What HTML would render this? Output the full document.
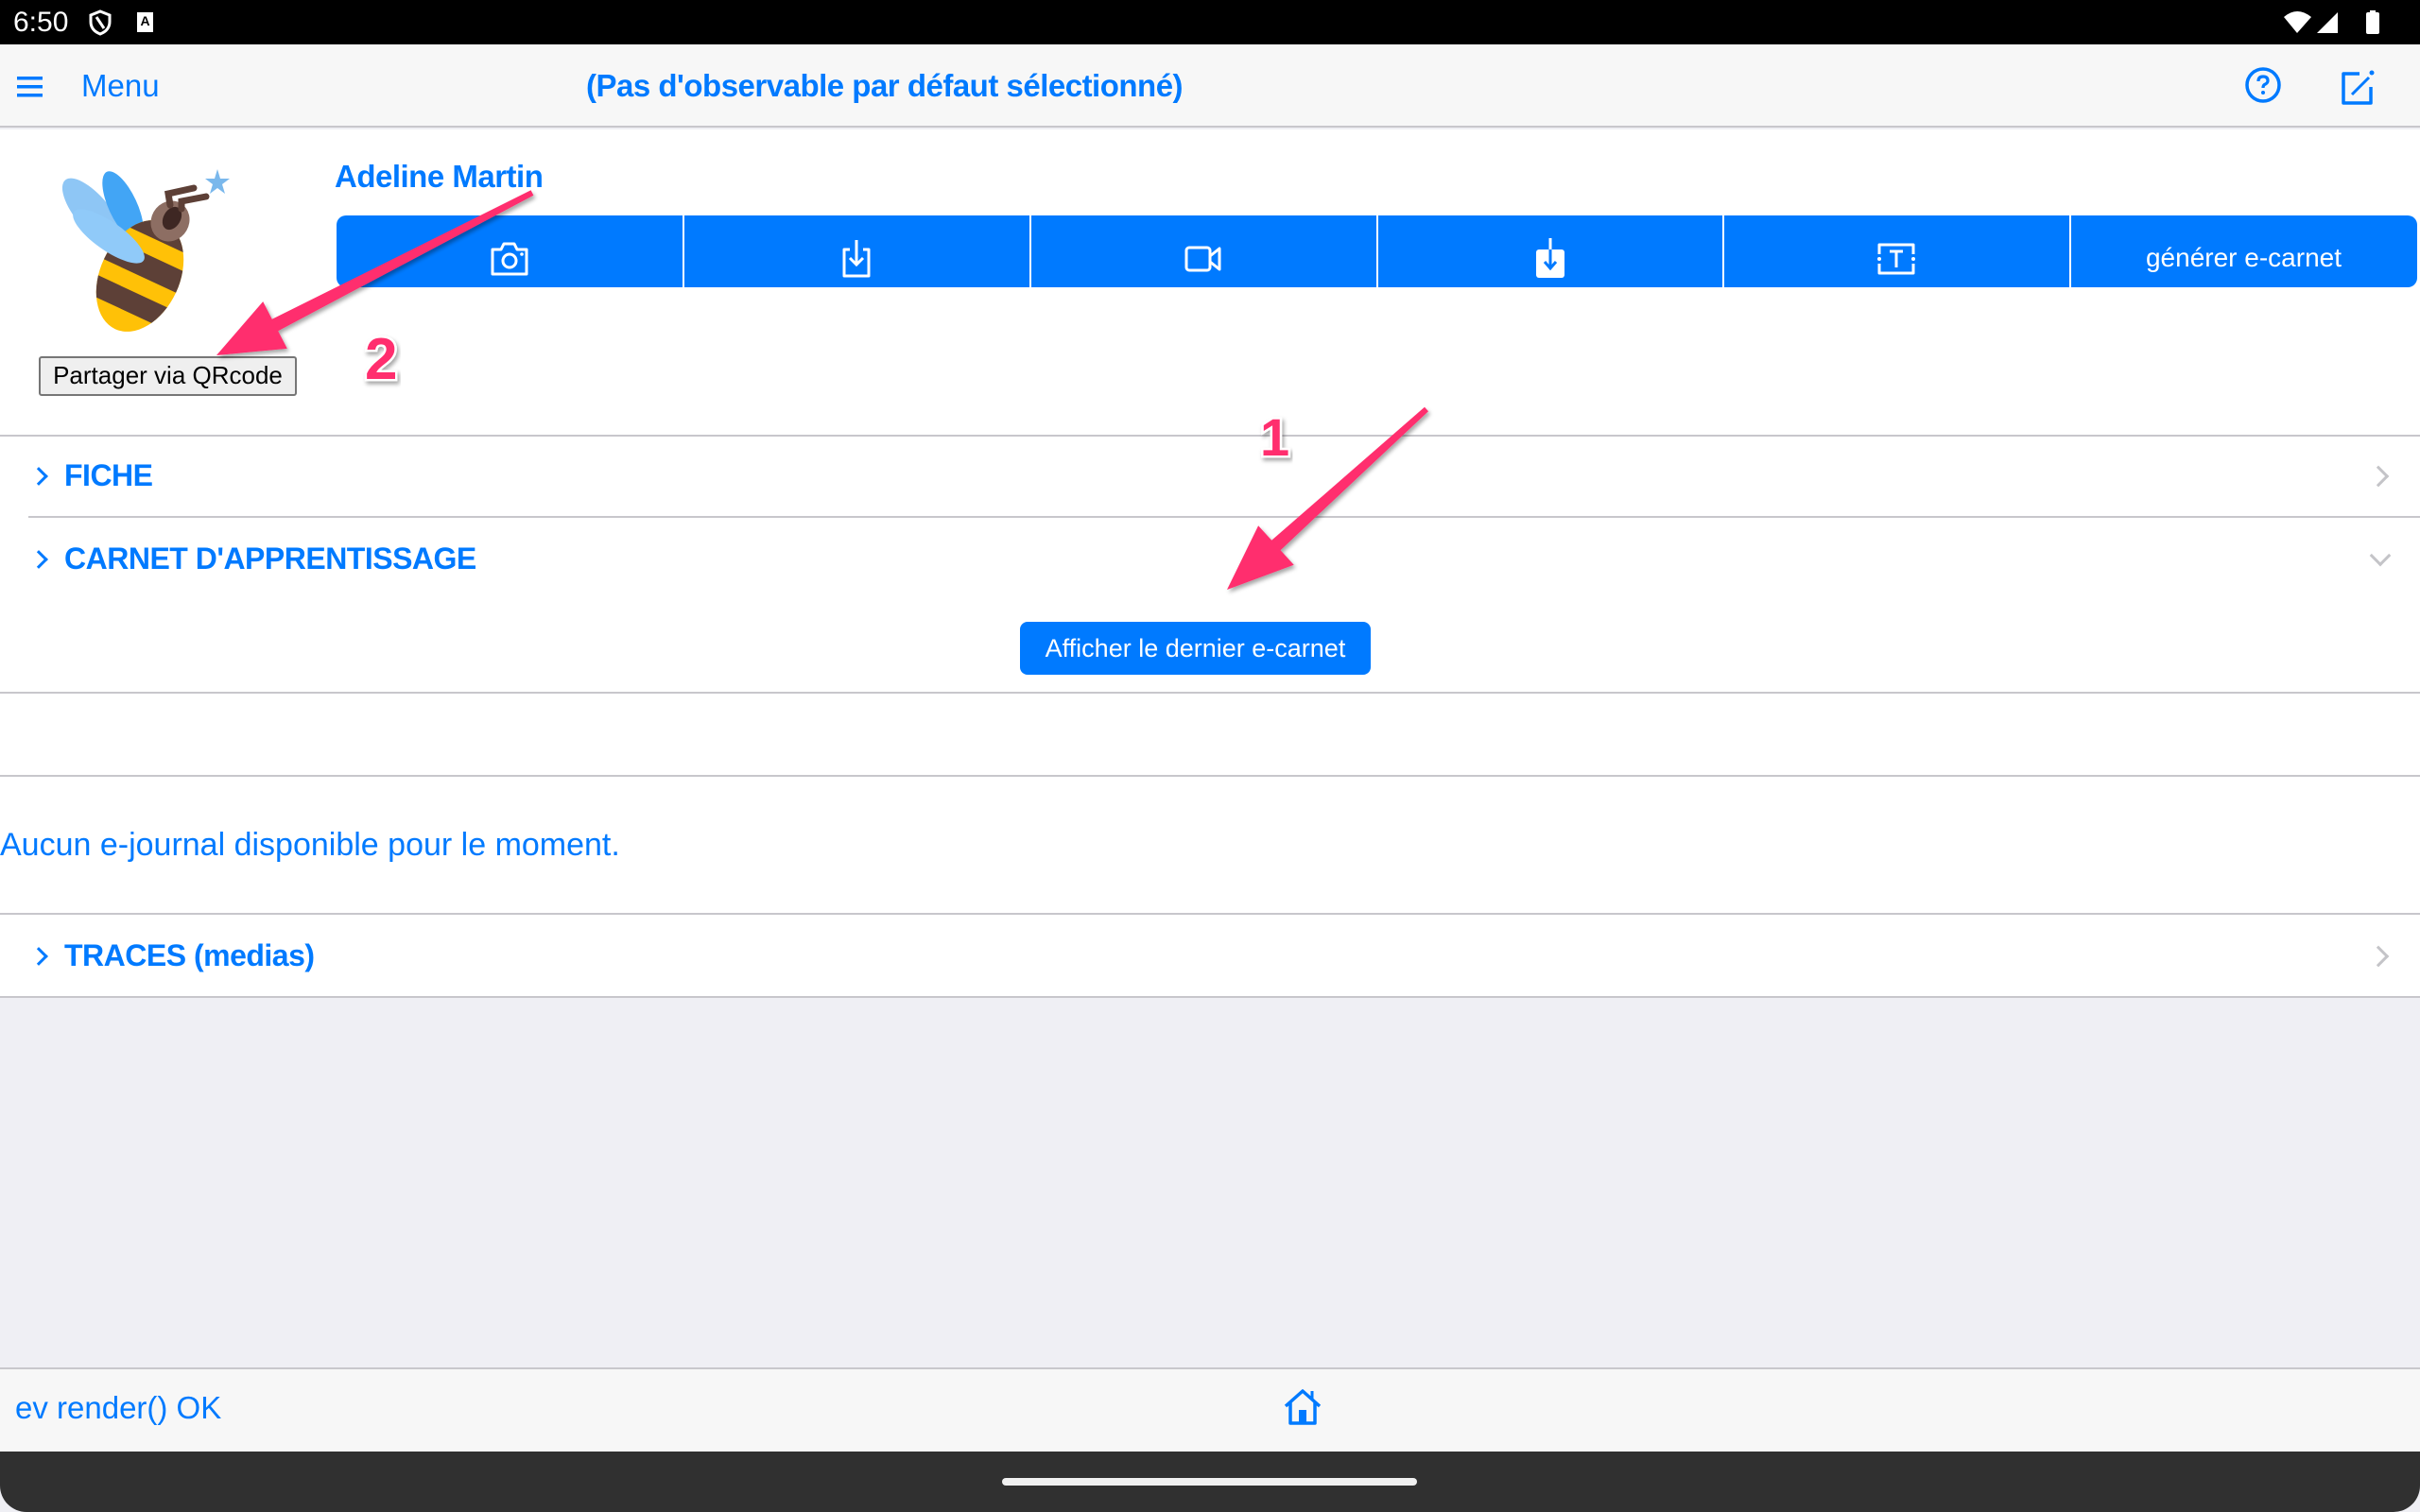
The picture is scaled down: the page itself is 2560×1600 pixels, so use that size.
<!DOCTYPE html>
<html><head><meta charset="utf-8"><style>
*{box-sizing:border-box;margin:0;padding:0}
body{width:2560px;height:1600px;position:relative;overflow:hidden;background:#efeff4;font-family:"Liberation Sans",sans-serif;color:#007aff}
.a{position:absolute}
.hl{position:absolute;height:2px;background:#c8c7cc}
.sec{position:absolute;left:68px;font-size:32px;font-weight:bold;letter-spacing:-0.5px}
.chev{position:absolute;left:34px;width:14px;height:14px;border-right:3px solid #007aff;border-top:3px solid #007aff;transform:rotate(45deg)}
.rchev{position:absolute;width:16px;height:16px;border-right:3px solid #c4c4c8;border-top:3px solid #c4c4c8}
.cell{position:absolute;top:236px;height:76px;width:366px;display:flex;align-items:center;justify-content:center;color:#fff}
</style></head><body>
<!-- status bar -->
<div class="a" style="left:0;top:0;width:2560px;height:47px;background:#000"></div>
<div class="a" style="left:14px;top:7px;font-size:30px;color:#fff">6:50</div>
<svg class="a" style="left:93px;top:10px" width="26" height="28" viewBox="0 0 26 28"><path d="M13 2 L23 6 V13 C23 20 18 24 13 26 C8 24 3 20 3 13 V6 Z" fill="none" stroke="#fff" stroke-width="3"/><path d="M9 8 L17 20" stroke="#fff" stroke-width="3"/></svg>
<div class="a" style="left:145px;top:13px;width:17px;height:21px;background:#fff;color:#000;font-size:14px;font-weight:bold;text-align:center;line-height:18px">A</div>
<svg class="a" style="left:2415px;top:10px" width="120" height="28" viewBox="0 0 120 28"><path d="M1 8 Q15 -4 30 8 L15 25 Z" fill="#fff"/><path d="M36 25 L58 3 V25 Z" fill="#fff"/><rect x="88" y="3" width="14" height="23" rx="2" fill="#fff"/><rect x="92" y="1" width="6" height="3" fill="#fff"/></svg>
<!-- header -->
<div class="a" style="left:0;top:47px;width:2560px;height:88px;background:#f7f7f7;border-bottom:2px solid #c8c7cc"></div>
<svg class="a" style="left:18px;top:81px" width="28" height="22" viewBox="0 0 28 22"><rect y="0" width="27" height="3.5" fill="#007aff"/><rect y="9" width="27" height="3.5" fill="#007aff"/><rect y="18" width="27" height="3.5" fill="#007aff"/></svg>
<div class="a" style="left:86px;top:72px;font-size:33px">Menu</div>
<div class="a" style="left:620px;top:72px;font-size:33px;font-weight:bold;width:630px;text-align:center;white-space:nowrap;letter-spacing:-0.5px">(Pas d'observable par défaut sélectionné)</div>
<svg class="a" style="left:2374px;top:70px" width="40" height="40" viewBox="0 0 40 40"><circle cx="20" cy="20" r="17" fill="none" stroke="#007aff" stroke-width="3.5"/><path d="M15 16 Q15 11 20 11 Q25 11 25 15.5 Q25 18 21.5 19.5 Q20 20.5 20 23" fill="none" stroke="#007aff" stroke-width="3.2"/><circle cx="20" cy="28" r="2" fill="#007aff"/></svg>
<svg class="a" style="left:2474px;top:72px" width="40" height="42" viewBox="0 0 40 42"><path d="M22 6 H5 V37 H34 V20" fill="none" stroke="#007aff" stroke-width="3.5" stroke-linejoin="round"/><path d="M14 28 L32 10" stroke="#007aff" stroke-width="3"/><circle cx="35" cy="5" r="2.5" fill="#007aff"/></svg>
<!-- white content -->
<div class="a" style="left:0;top:137px;width:2560px;height:918px;background:#fff"></div>
<!-- bee -->
<svg class="a" style="left:50px;top:170px" width="200" height="190" viewBox="0 0 200 190">
<defs><clipPath id="bc"><ellipse cx="98" cy="122" rx="42" ry="62" transform="rotate(25 98 122)"/></clipPath></defs>
<polygon points="180,9 183,19 193,19 185,25 188,35 180,29 172,35 175,25 167,19 177,19" fill="#7ab8ec"/>
<ellipse cx="48" cy="55" rx="18" ry="45" transform="rotate(-40 48 55)" fill="#8ec6f5"/>
<ellipse cx="80" cy="48" rx="15" ry="40" transform="rotate(-25 80 48)" fill="#42a5f5"/>
<g clip-path="url(#bc)">
<rect x="0" y="0" width="200" height="200" fill="#ffc107"/>
<g transform="rotate(25 98 122)">
<rect x="40" y="60" width="120" height="20" fill="#5d4037"/>
<rect x="40" y="98" width="120" height="24" fill="#5d4037"/>
<rect x="40" y="140" width="120" height="22" fill="#5d4037"/>
</g></g>
<ellipse cx="65" cy="80" rx="15" ry="45" transform="rotate(-55 65 80)" fill="#90caf9"/>
<ellipse cx="130" cy="64" rx="20" ry="22" transform="rotate(30 130 64)" fill="#8d6e63"/>
<ellipse cx="132" cy="61" rx="9" ry="13" transform="rotate(30 132 61)" fill="#3e2723"/>
<path d="M130 47 L128 35 L155 29" fill="none" stroke="#5d4037" stroke-width="7" stroke-linecap="round"/>
<path d="M142 51 L142 43 L168 38" fill="none" stroke="#5d4037" stroke-width="7" stroke-linecap="round"/>
</svg>
<div class="a" style="left:354px;top:168px;font-size:33px;font-weight:bold;letter-spacing:-0.5px">Adeline Martin</div>
<!-- button bar -->
<div class="a" style="left:356px;top:228px;width:2201px;height:76px;background:#007aff;border-radius:10px"></div>
<div class="a" style="left:722px;top:228px;width:2px;height:76px;background:#fff"></div>
<div class="a" style="left:1089px;top:228px;width:2px;height:76px;background:#fff"></div>
<div class="a" style="left:1456px;top:228px;width:2px;height:76px;background:#fff"></div>
<div class="a" style="left:1822px;top:228px;width:2px;height:76px;background:#fff"></div>
<div class="a" style="left:2189px;top:228px;width:2px;height:76px;background:#fff"></div>
<div class="cell" style="left:356px;top:228px;padding-top:16px"><svg width="44" height="40" viewBox="0 0 44 40"><path d="M4 10 H13 L16 4 H27 L30 10 H40 V36 H4 Z" fill="none" stroke="#fff" stroke-width="3" stroke-linejoin="round"/><circle cx="22" cy="22" r="7" fill="none" stroke="#fff" stroke-width="3"/><circle cx="35" cy="15" r="1.8" fill="#fff"/></svg></div>
<div class="cell" style="left:723px;top:228px;padding-top:16px"><svg width="36" height="44" viewBox="0 0 36 44"><path d="M11 12 H5 V40 H31 V12 H25" fill="none" stroke="#fff" stroke-width="3" stroke-linejoin="round"/><path d="M18 2 V28 M11 21 L18 28 L25 21" fill="none" stroke="#fff" stroke-width="3"/></svg></div>
<div class="cell" style="left:1090px;top:228px;padding-top:16px"><svg width="42" height="30" viewBox="0 0 42 30"><rect x="3" y="3" width="25" height="24" rx="3" fill="none" stroke="#fff" stroke-width="3"/><path d="M28 12 L38 4 V26 L28 18" fill="none" stroke="#fff" stroke-width="3" stroke-linejoin="round"/></svg></div>
<div class="cell" style="left:1457px;top:228px;padding-top:16px"><svg width="34" height="44" viewBox="0 0 34 44"><rect x="2" y="12" width="30" height="30" rx="3" fill="#fff"/><path d="M17 0 V32 M11 25 L17 32 L23 25" fill="none" stroke="#007aff" stroke-width="3"/><path d="M17 0 V12" stroke="#fff" stroke-width="3"/></svg></div>
<div class="cell" style="left:1823px;top:228px;padding-top:16px"><svg width="44" height="38" viewBox="0 0 44 38"><path d="M4 14 V4 H40 V14 M4 24 V34 H40 V24" fill="none" stroke="#fff" stroke-width="3" stroke-linejoin="round"/><circle cx="4" cy="19" r="2" fill="#fff"/><circle cx="40" cy="19" r="2" fill="#fff"/><path d="M15 11 H29 M22 11 V28" stroke="#fff" stroke-width="3"/></svg></div>
<div class="cell" style="left:2190px;top:228px;padding-top:14px;width:367px;font-size:28px">générer e-carnet</div>
<!-- QR button -->
<div class="a" style="left:41px;top:377px;width:273px;height:42px;background:#efefef;border:2px solid #767676;border-radius:3px;color:#000;font-size:26px;text-align:center;line-height:37px">Partager via QRcode</div>
<!-- sections -->
<div class="hl" style="left:0;top:460px;width:2560px"></div>
<div class="chev" style="top:497px"></div>
<div class="sec" style="top:485px">FICHE</div>
<div class="rchev" style="left:2508px;top:496px;transform:rotate(45deg)"></div>
<div class="hl" style="left:30px;top:546px;width:2530px"></div>
<div class="chev" style="top:585px"></div>
<div class="sec" style="top:573px">CARNET D'APPRENTISSAGE</div>
<div class="rchev" style="left:2510px;top:580px;transform:rotate(135deg)"></div>
<div class="a" style="left:1079px;top:658px;width:371px;height:56px;background:#007aff;border-radius:8px;color:#fff;font-size:27px;text-align:center;line-height:56px">Afficher le dernier e-carnet</div>
<div class="hl" style="left:0;top:732px;width:2560px"></div>
<div class="hl" style="left:0;top:820px;width:2560px"></div>
<div class="a" style="left:0;top:875px;font-size:34px">Aucun e-journal disponible pour le moment.</div>
<div class="hl" style="left:0;top:966px;width:2560px"></div>
<div class="chev" style="top:1005px"></div>
<div class="sec" style="top:993px">TRACES (medias)</div>
<div class="rchev" style="left:2508px;top:1004px;transform:rotate(45deg)"></div>
<div class="hl" style="left:0;top:1054px;width:2560px"></div>
<!-- footer -->
<div class="a" style="left:0;top:1447px;width:2560px;height:89px;background:#f7f7f7;border-top:2px solid #c8c7cc"></div>
<div class="a" style="left:16px;top:1471px;font-size:33px">ev render() OK</div>
<svg class="a" style="left:1356px;top:1468px" width="44" height="42" viewBox="0 0 44 42"><path d="M4 20 L22 4 L40 20 M9 16 V38 H35 V16" fill="none" stroke="#007aff" stroke-width="3.5" stroke-linejoin="round"/><rect x="18" y="24" width="8" height="14" fill="#007aff"/><path d="M32 4 V12" stroke="#007aff" stroke-width="3"/></svg>
<div class="a" style="left:0;top:1536px;width:2560px;height:64px;background:#303030;border-radius:0 0 28px 28px"></div>
<div class="a" style="left:1060px;top:1564px;width:439px;height:8px;background:#f0f0f0;border-radius:4px"></div>
<!-- annotations -->
<svg class="a" style="left:0;top:0" width="2560" height="1600">
<defs><filter id="s"><feDropShadow dx="2" dy="3" stdDeviation="2" flood-opacity="0.35"/></filter></defs>
<g filter="url(#s)" fill="#ff2f6e">
<polygon points="561.6,201.3 287.8,337.8 278.2,319.1 229,376 303.8,368.9 294.2,350.2 564.4,206.7"/>
<polygon points="1507,430.8 1345.2,571.8 1331.1,556.3 1298,624 1368.7,597.7 1354.6,582.2 1511,435.2"/>
</g>
<text x="386" y="401" font-family="Liberation Sans" font-weight="bold" font-size="62" fill="#ff2f6e" stroke="#fff" stroke-width="5" paint-order="stroke" filter="url(#s)">2</text>
<text x="1333" y="482" font-family="Liberation Sans" font-weight="bold" font-size="56" fill="#ff2f6e" stroke="#fff" stroke-width="5" paint-order="stroke" filter="url(#s)">1</text>
</svg>
</body></html>
